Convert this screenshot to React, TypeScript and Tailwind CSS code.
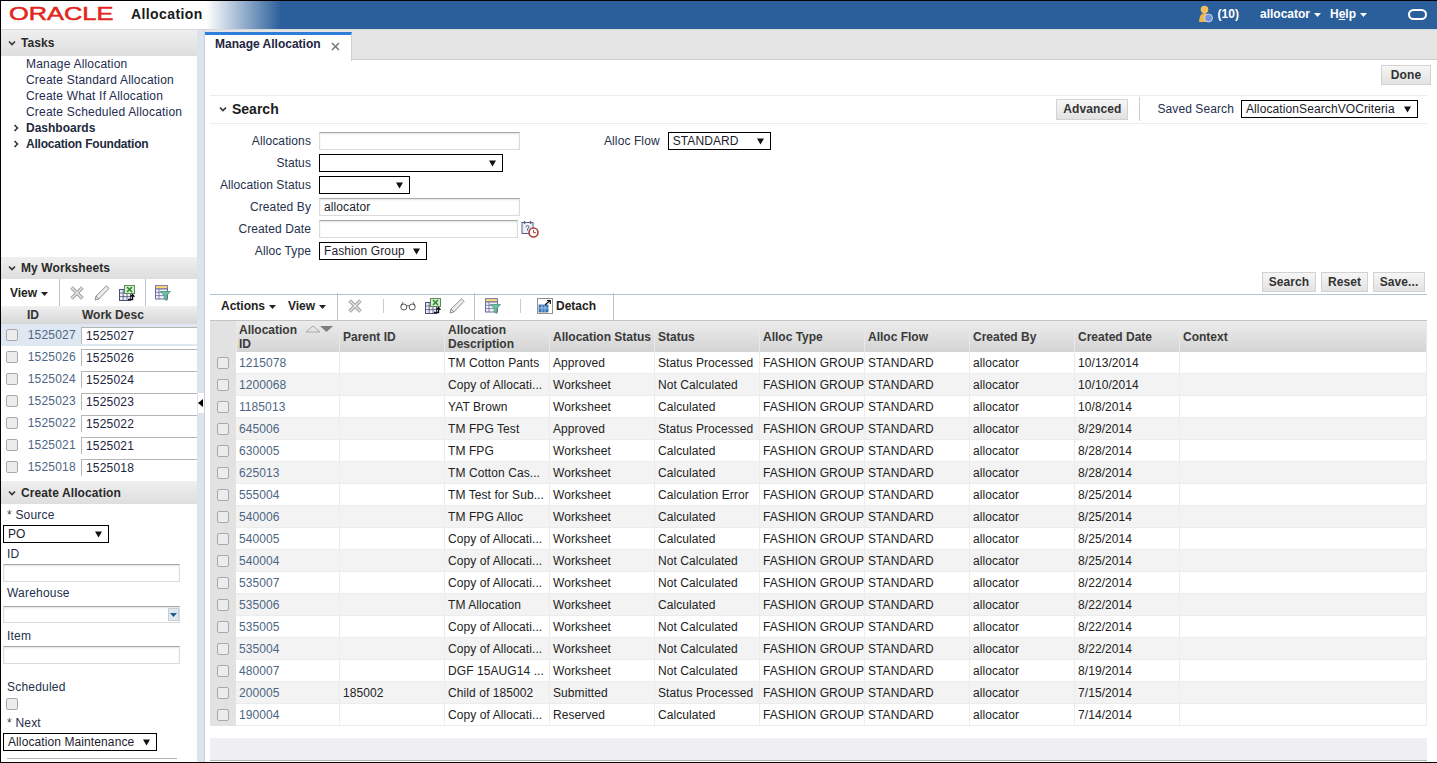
import React from "react";

const rows = [
  ["1215078", "", "TM Cotton Pants", "Approved", "Status Processed", "10/13/2014"],
  ["1200068", "", "Copy of Allocati...", "Worksheet", "Not Calculated", "10/10/2014"],
  ["1185013", "", "YAT Brown", "Worksheet", "Calculated", "10/8/2014"],
  ["645006", "", "TM FPG Test", "Approved", "Status Processed", "8/29/2014"],
  ["630005", "", "TM FPG", "Worksheet", "Calculated", "8/28/2014"],
  ["625013", "", "TM Cotton Cas...", "Worksheet", "Calculated", "8/28/2014"],
  ["555004", "", "TM Test for Sub...", "Worksheet", "Calculation Error", "8/25/2014"],
  ["540006", "", "TM FPG Alloc", "Worksheet", "Calculated", "8/25/2014"],
  ["540005", "", "Copy of Allocati...", "Worksheet", "Calculated", "8/25/2014"],
  ["540004", "", "Copy of Allocati...", "Worksheet", "Not Calculated", "8/25/2014"],
  ["535007", "", "Copy of Allocati...", "Worksheet", "Not Calculated", "8/22/2014"],
  ["535006", "", "TM Allocation", "Worksheet", "Calculated", "8/22/2014"],
  ["535005", "", "Copy of Allocati...", "Worksheet", "Not Calculated", "8/22/2014"],
  ["535004", "", "Copy of Allocati...", "Worksheet", "Not Calculated", "8/22/2014"],
  ["480007", "", "DGF 15AUG14 ...", "Worksheet", "Not Calculated", "8/19/2014"],
  ["200005", "185002", "Child of 185002", "Submitted", "Status Processed", "7/15/2014"],
  ["190004", "", "Copy of Allocati...", "Reserved", "Calculated", "7/14/2014"],
];

const worksheets = ["1525027", "1525026", "1525024", "1525023", "1525022", "1525021", "1525018"];

const Chevron = ({ open = true }: { open?: boolean }) => (
  <svg width="8" height="8" viewBox="0 0 8 8" className="shrink-0">
    <path
      d={open ? "M1 2.5 L4 5.5 L7 2.5" : "M2.5 1 L5.5 4 L2.5 7"}
      fill="none"
      stroke="#333"
      strokeWidth="1.6"
    />
  </svg>
);

const Caret = () => (
  <svg width="7" height="4" viewBox="0 0 7 4" className="shrink-0 mt-[2px]">
    <polygon points="0,0 7,0 3.5,4" fill="currentColor" />
  </svg>
);

const CloseX = () => (
  <svg width="16" height="16" viewBox="0 0 16 16">
    <path d="M2.5 2.5 L13.5 13.5 M13.5 2.5 L2.5 13.5" stroke="#a0a0a0" strokeWidth="3.6" />
    <path d="M2.5 2.5 L13.5 13.5 M13.5 2.5 L2.5 13.5" stroke="#e8e8e8" strokeWidth="1.4" />
  </svg>
);

const Pencil = () => (
  <svg width="16" height="16" viewBox="0 0 16 16">
    <path d="M1 15 L2 11 L12.5 0.8 L15 3.4 L4.8 14 Z" fill="#ececec" stroke="#8f8f8f" />
    <path d="M2 11 L4.8 14" stroke="#8f8f8f" />
  </svg>
);

const ExcelIcon = () => (
  <svg width="16" height="16" viewBox="0 0 16 16">
    <rect x="0.5" y="4.5" width="11" height="11" fill="#eef0f6" stroke="#4a4f7a" />
    <path d="M0.5 8 H11.5 M0.5 11.6 H11.5 M4.2 4.5 V15.5 M8 4.5 V15.5" stroke="#4a4f7a" strokeWidth="0.8" />
    <rect x="5.5" y="0.5" width="10" height="8" fill="#d9ecd4" stroke="#5a8f5a" />
    <path d="M8 2 L13 7 M13 2 L8 7" stroke="#2f8f2f" strokeWidth="1.7" />
    <path d="M9 14.5 H13.5 V10.5 M11.5 11.8 L13.5 9.5 L15.5 11.8" fill="none" stroke="#111" strokeWidth="1.4" />
  </svg>
);

const FilterIcon = () => (
  <svg width="16" height="16" viewBox="0 0 16 16">
    <rect x="0.5" y="0.5" width="12" height="3.5" fill="#f4d878" stroke="#8a7bb0" />
    <rect x="0.5" y="4" width="12" height="10" fill="#f2f2fa" stroke="#6a6aa0" />
    <path d="M0.5 7.3 H11 M0.5 10.6 H11 M4 4 V14" stroke="#6a6aa0" strokeWidth="0.8" />
    <path d="M5.5 6.5 H15.5 L11.8 10.5 V15.5 L9.2 14 V10.5 Z" fill="#6cc0a0" stroke="#3f8f78" strokeWidth="0.7" />
  </svg>
);

const Glasses = () => (
  <svg width="16" height="10" viewBox="0 0 16 10">
    <circle cx="3.8" cy="6" r="3" fill="none" stroke="#555" strokeWidth="1" />
    <circle cx="12.2" cy="6" r="3" fill="none" stroke="#555" strokeWidth="1" />
    <path d="M6.5 5 Q8 4 9.5 5 M1 5 L3 1 M15 5 L13 1" fill="none" stroke="#555" strokeWidth="0.9" />
  </svg>
);

const DetachIcon = () => (
  <svg width="16" height="16" viewBox="0 0 16 16">
    <rect x="0.5" y="0.5" width="15" height="15" fill="#fff" stroke="#222" strokeDasharray="1 1" />
    <rect x="2" y="7" width="9" height="7" fill="#3f7fc4" stroke="#2a5a94" strokeWidth="0.7" />
    <path d="M2 10 H11 M5 7 V14 M8 7 V14" stroke="#d6e6f6" strokeWidth="0.6" />
    <path d="M8 7 L13 2.5 M10 2.5 H13.3 V6" fill="none" stroke="#111" strokeWidth="1.2" />
  </svg>
);

const CalendarClock = () => (
  <svg width="18" height="18" viewBox="0 0 18 18">
    <rect x="1" y="2.5" width="11" height="11" fill="#eef0f6" stroke="#55608a" />
    <path d="M3.5 1 V4 M9.5 1 V4" stroke="#55608a" strokeWidth="1.2" />
    <path d="M4.5 7 Q6.5 4.5 8 6.5 Q8 8 6.5 9 V10.5" fill="none" stroke="#55608a" strokeWidth="1" />
    <circle cx="12.5" cy="12.5" r="4.5" fill="#fff" stroke="#a8443a" strokeWidth="1.6" />
    <path d="M12.5 10 V12.7 H15" fill="none" stroke="#a8443a" strokeWidth="1" />
  </svg>
);

const NotifyIcon = () => (
  <svg width="16" height="18" viewBox="0 0 16 18">
    <circle cx="6.5" cy="4.5" r="3.8" fill="#f0c060" />
    <path d="M1 17 Q1.5 8 6.5 8 Q11 8 11.5 17 Z" fill="#eeb650" />
    <circle cx="10.5" cy="13" r="4" fill="#6f94d8" stroke="#dfe8f8" strokeWidth="0.8" />
  </svg>
);

const Sep = ({ className = "h-[27px]" }: { className?: string }) => (
  <div className={`w-px bg-[#b9c4d3] shrink-0 ${className}`} />
);

const PanelHeader = ({ title, className = "" }: { title: string; className?: string }) => (
  <div
    className={`flex items-center shrink-0 gap-[5px] pl-[7px] bg-[linear-gradient(#efefef,#dedede)] font-bold text-[#2a2a2a] text-[12px] tracking-[0.1px] ${className}`}
  >
    <Chevron />
    <span>{title}</span>
  </div>
);

const Checkbox = ({ className = "" }: { className?: string }) => (
  <div className={`w-[12px] h-[12px] shrink-0 rounded-[2px] border border-[#a9a9a9] bg-[#ececec] ${className}`} />
);

const Select = ({ value = "", className = "" }: { value?: string; className?: string }) => (
  <div
    className={`flex items-center shrink-0 justify-between h-[18px] border border-black bg-white pl-[4px] pr-[6px] text-[12px] text-[#1c1c2c] tracking-[0.1px] ${className}`}
  >
    <span>{value}</span>
    <svg width="7" height="7" viewBox="0 0 7 7" className="shrink-0">
      <polygon points="0,0.5 7,0.5 3.5,6.5" fill="#111" />
    </svg>
  </div>
);

const TextInput = ({ value = "", className = "" }: { value?: string; className?: string }) => (
  <input
    readOnly
    value={value}
    className={`h-[18px] shrink-0 border border-[#dcdcdc] border-t-[#a8a8a8] bg-white px-[4px] text-[12px] text-[#1c1c2c] tracking-[0.1px] shadow-[inset_0_1px_2px_#e2e2e2] outline-none ${className}`}
  />
);

const Button = ({ label, className = "" }: { label: string; className?: string }) => (
  <div
    className={`flex items-center justify-center h-[20px] border border-[#d2d2d2] bg-[linear-gradient(#f6f6f6,#e2e2e2)] font-bold text-[12px] text-[#333] tracking-[0.1px] ${className}`}
  >
    {label}
  </div>
);

const FormRow = ({ label, children }: { label: string; children: React.ReactNode }) => (
  <div className="flex items-center h-[22px]">
    <span className="w-[101px] pr-[8px] text-right text-[12px] text-[#24304c] tracking-[0.1px] whitespace-nowrap">
      {label}
    </span>
    {children}
  </div>
);

const Sidebar = () => (
  <div className="flex flex-col w-[197px] shrink-0 border-r border-[#dfe3e8] text-[12px] tracking-[0.2px]">
    <PanelHeader title="Tasks" className="h-[26px]" />
    <div className="flex flex-col shrink-0 h-[201px] pl-[25px] leading-[16px] text-[#242c50]">
      <span>Manage Allocation</span>
      <span>Create Standard Allocation</span>
      <span>Create What If Allocation</span>
      <span>Create Scheduled Allocation</span>
      <span className="relative font-bold text-[#1e2a3e] tracking-normal">
        <span className="absolute -left-[14px] top-[4px]">
          <Chevron open={false} />
        </span>
        Dashboards
      </span>
      <span className="relative font-bold text-[#1e2a3e] tracking-[-0.2px]">
        <span className="absolute -left-[14px] top-[4px]">
          <Chevron open={false} />
        </span>
        Allocation Foundation
      </span>
    </div>
    <PanelHeader title="My Worksheets" className="h-[22px]" />
    <div className="flex items-center shrink-0 h-[27px]">
      <span className="flex items-center gap-[4px] pl-[9px] w-[58px] font-bold text-[#222] tracking-normal">
        View <Caret />
      </span>
      <Sep />
      <div className="flex items-center gap-[9px] pl-[9px] pr-[10px]">
        <CloseX />
        <Pencil />
        <ExcelIcon />
      </div>
      <Sep />
      <div className="pl-[9px]">
        <FilterIcon />
      </div>
    </div>
    <div className="flex shrink-0 h-[18px] items-center bg-[linear-gradient(#f0f0f0,#d6d6d6)] font-bold text-[#333] tracking-normal">
      <span className="w-[26px] h-full" />
      <span className="w-[55px]">ID</span>
      <span>Work Desc</span>
    </div>
    {worksheets.map((id, i) => (
      <div key={id} className={`flex shrink-0 items-center h-[22px] ${i === 0 ? "bg-[#dfe8f2]" : "bg-white"}`}>
        <span className="flex justify-center w-[22px]">
          <Checkbox />
        </span>
        <span className="w-[59px] pl-[5px] text-[#4d6684]">{id}</span>
        <input
          readOnly
          value={id}
          className="w-[116px] h-[17px] border-t border-l border-[#b5b5b5] bg-white pl-[4px] text-[12px] tracking-[0.2px] text-[#1c2440] outline-none"
        />
      </div>
    ))}
    <PanelHeader title="Create Allocation" className="h-[23px] mt-[3px]" />
    <div className="flex flex-col shrink-0 pl-[2px] pt-[3px] text-[#24304c]">
      <span className="pl-[4px] h-[18px] leading-[17px]"><span className="text-[#444]">*</span> Source</span>
      <Select value="PO" className="w-[106px]" />
      <span className="pl-[4px] h-[21px] leading-[22px]">ID</span>
      <TextInput className="w-[177px]" />
      <span className="pl-[4px] h-[21px] leading-[22px]">Warehouse</span>
      <div className="relative w-[177px] mt-[3px]">
        <TextInput className="w-[177px] block !h-[17px]" />
        <div className="absolute right-[1px] top-[2px] flex items-center justify-center w-[11px] h-[13px] bg-[#dfe7ee] border border-[#c6d0da]">
          <svg width="7" height="4" viewBox="0 0 7 4">
            <polygon points="0,0 7,0 3.5,4" fill="#1f5a86" />
          </svg>
        </div>
      </div>
      <span className="pl-[4px] h-[21px] leading-[22px] mt-[2px]">Item</span>
      <TextInput className="w-[177px]" />
      <span className="pl-[4px] h-[18px] leading-[18px] mt-[14px]">Scheduled</span>
      <Checkbox className="ml-[3px] mt-[2px]" />
      <span className="pl-[4px] h-[16px] leading-[18px] mt-[4px]"><span className="text-[#444]">*</span> Next</span>
      <Select value="Allocation Maintenance" className="w-[154px] mt-[3px]" />
      <div className="w-[170px] ml-[4px] mt-[7px] border-t border-[#b5b5b5]" />
    </div>
  </div>
);

const SearchPanel = () => (
  <div className="ml-[5px] mr-[10px] h-[199px] shrink-0 flex flex-col">
    <div className="flex items-center h-[29px] pb-[1px] border-t border-b border-[#ececec] pl-[9px] pr-[9px]">
      <Chevron />
      <span className="ml-[5px] font-bold text-[14px] text-[#1c1c1c]">Search</span>
      <div className="flex-1" />
      <Button label="Advanced" className="w-[72px] h-[21px]" />
      <div className="w-px h-[24px] bg-[#cfcfcf] mx-[11px]" />
      <span className="text-[12px] tracking-[0.1px] text-[#24304c] ml-[6px]">Saved Search</span>
      <Select value="AllocationSearchVOCriteria" className="w-[177px] ml-[7px]" />
    </div>
    <div className="flex pt-[6px]">
      <div className="flex flex-col w-[394px] shrink-0 pl-[8px]">
        <FormRow label="Allocations"><TextInput className="w-[201px]" /></FormRow>
        <FormRow label="Status"><Select className="w-[184px]" /></FormRow>
        <FormRow label="Allocation Status"><Select className="w-[91px]" /></FormRow>
        <FormRow label="Created By"><TextInput value="allocator" className="w-[201px]" /></FormRow>
        <FormRow label="Created Date">
          <TextInput className="w-[199px]" />
          <span className="ml-[3px]"><CalendarClock /></span>
        </FormRow>
        <FormRow label="Alloc Type"><Select value="Fashion Group" className="w-[108px]" /></FormRow>
      </div>
      <div className="flex items-center h-[22px]">
        <span className="text-[12px] tracking-[0.1px] text-[#24304c]">Alloc Flow</span>
        <Select value="STANDARD" className="w-[103px] ml-[8px]" />
      </div>
    </div>
    <div className="flex justify-end gap-[5px] pr-[2px] mt-[10px]">
      <Button label="Search" className="w-[54px]" />
      <Button label="Reset" className="w-[47px]" />
      <Button label="Save..." className="w-[52px]" />
    </div>
  </div>
);

const TableToolbar = () => (
  <div className="flex items-center shrink-0 h-[27px] pb-[3px] ml-[5px] mr-[10px] border-t border-b border-t-[#b9c4d3] border-b-[#c4c4c4] text-[12px]">
    <span className="flex items-center gap-[4px] pl-[11px] font-bold text-[#222] w-[78px]">
      Actions <Caret />
    </span>
    <span className="flex items-center gap-[4px] font-bold text-[#222] w-[49px]">
      View <Caret />
    </span>
    <Sep />
    <span className="ml-[9px]"><CloseX /></span>
    <div className="w-px h-[14px] bg-[#cccccc] ml-[20px]" />
    <span className="ml-[16px]"><Glasses /></span>
    <span className="ml-[9px]"><ExcelIcon /></span>
    <span className="ml-[8px]"><Pencil /></span>
    <span className="ml-[9px]"><Sep /></span>
    <span className="ml-[10px]"><FilterIcon /></span>
    <div className="w-px h-[14px] bg-[#cccccc] ml-[19px]" />
    <span className="ml-[16px]"><DetachIcon /></span>
    <span className="ml-[3px] font-bold text-[#222] w-[57px]">Detach</span>
    <Sep />
  </div>
);

const headCell = "px-[3px] py-0 border-r border-[#e8e8e8] text-left align-middle font-bold text-[#3a3a3a] leading-[14px] tracking-normal whitespace-nowrap";
const cell = "pl-[3px] pr-0 pt-[1px] pb-0 border-r border-b border-[#ececec] whitespace-nowrap overflow-hidden text-[#222]";

const ResultsTable = () => (
  <div className="ml-[5px] mr-[10px] text-[12px] tracking-[0.08px]">
    <table className="table-fixed w-[1217px] border-separate border-spacing-0">
      <colgroup>
        <col className="w-[26px]" />
        <col className="w-[104px]" />
        <col className="w-[105px]" />
        <col className="w-[105px]" />
        <col className="w-[105px]" />
        <col className="w-[105px]" />
        <col className="w-[105px]" />
        <col className="w-[105px]" />
        <col className="w-[105px]" />
        <col className="w-[105px]" />
        <col className="w-[247px]" />
      </colgroup>
      <thead>
        <tr className="h-[31px] bg-[linear-gradient(#ececec,#d4d4d4)]">
          <th className="bg-[#e2e2e2]" />
          <th className={`${headCell} !pl-[2px] border-l border-[#999]`}>
            <div className="flex items-start justify-between pr-[3px]">
              <span>Allocation<br />ID</span>
              <svg width="28" height="8" viewBox="0 0 28 8" className="mt-[2px]">
                <polygon points="1,7 8,1 15,7" fill="none" stroke="#999" strokeWidth="0.8" />
                <polygon points="15,1 28,1 21.5,7" fill="#7d7d85" />
              </svg>
            </div>
          </th>
          <th className={headCell}>Parent ID</th>
          <th className={headCell}>Allocation<br />Description</th>
          <th className={headCell}>Allocation Status</th>
          <th className={headCell}>Status</th>
          <th className={headCell}>Alloc Type</th>
          <th className={headCell}>Alloc Flow</th>
          <th className={headCell}>Created By</th>
          <th className={headCell}>Created Date</th>
          <th className={headCell}>Context</th>
        </tr>
      </thead>
      <tbody>
        {rows.map((r, i) => (
          <tr key={r[0]} className={`h-[22px] ${i % 2 === 0 ? "bg-white" : "bg-[#f3f3f3]"}`}>
            <td className="bg-[#e2e2e2] p-0">
              <div className="flex justify-center"><Checkbox /></div>
            </td>
            <td className={`${cell} !pl-[3px] !text-[#4d6684]`}>{r[0]}</td>
            <td className={cell}>{r[1]}</td>
            <td className={cell}>{r[2]}</td>
            <td className={cell}>{r[3]}</td>
            <td className={cell}>{r[4]}</td>
            <td className={cell}>FASHION GROUP</td>
            <td className={cell}>STANDARD</td>
            <td className={cell}>allocator</td>
            <td className={cell}>{r[5]}</td>
            <td className={cell} />
          </tr>
        ))}
      </tbody>
    </table>
    <div className="h-[12px]" />
    <div className="h-[23px] w-[1217px] bg-[#eeeef3] border-b border-[#b5b5b5]" />
  </div>
);

export default function App() {
  return (
    <div className="relative flex flex-col w-[1437px] h-[763px] overflow-hidden border-t border-l border-b border-black bg-white font-['Liberation_Sans',Arial,sans-serif]">
      <div className="flex items-center h-[29px] pb-[2px] shrink-0 bg-[linear-gradient(90deg,#fff_0,#fff_205px,#2b5f9b_280px)] border-b border-[#d8d8d8]">
        <span className="ml-[8px] w-[121px] text-[#e2261c] text-[18px] leading-none [-webkit-text-stroke:0.5px_#e2261c] origin-left scale-x-[1.41] whitespace-nowrap">
          ORACLE
        </span>
        <span className="ml-[1px] font-bold text-[14px] tracking-[0.4px] text-[#1a1a1a]">Allocation</span>
        <div className="flex-1" />
        <NotifyIcon />
        <span className="ml-[4px] text-white font-bold text-[12px]">(10)</span>
        <span className="ml-[21px] flex items-center gap-[4px] text-white font-bold text-[12px]">
          allocator <Caret />
        </span>
        <span className="ml-[9px] flex items-center gap-[4px] text-white font-bold text-[12px]">
          <span>H<span className="underline">e</span>lp</span> <Caret />
        </span>
        <div className="ml-[41px] mr-[10px] w-[19px] h-[11px] rounded-[6px] border-[2.5px] border-white" />
      </div>
      <div className="flex flex-1 min-h-0">
        <Sidebar />
        <div className="w-[7px] shrink-0 bg-[#dbe3ed] border-r border-[#c9d0da] relative">
          <div className="absolute left-0 top-[363px] w-[6px] h-[20px] bg-white flex items-center">
            <svg width="5" height="8" viewBox="0 0 5 8">
              <polygon points="5,0 5,8 0,4" fill="#000" />
            </svg>
          </div>
        </div>
        <div className="flex flex-col flex-1 min-w-0">
          <div className="flex items-start h-[30px] shrink-0 bg-[#e4e4e4] border-b border-[#cfcfcf]">
            <div className="flex items-center w-[147px] h-[29px] mt-[2px] pb-[8px] bg-white border-t-[3px] border-r border-t-[#2f7fd8] border-r-[#d0d0d0] pl-[10px] font-bold text-[12px] text-[#1c2440]">
              <span>Manage Allocation</span>
              <svg width="9" height="9" viewBox="0 0 9 9" className="ml-[10px] mt-[4px]">
                <path d="M1 1 L8 8 M8 1 L1 8" stroke="#777" strokeWidth="1.5" />
              </svg>
            </div>
          </div>
          <div className="flex justify-end items-start pt-[5px] h-[35px] shrink-0 pr-[6px]">
            <Button label="Done" className="w-[50px] h-[20px]" />
          </div>
          <SearchPanel />
          <TableToolbar />
          <ResultsTable />
        </div>
      </div>
    </div>
  );
}
